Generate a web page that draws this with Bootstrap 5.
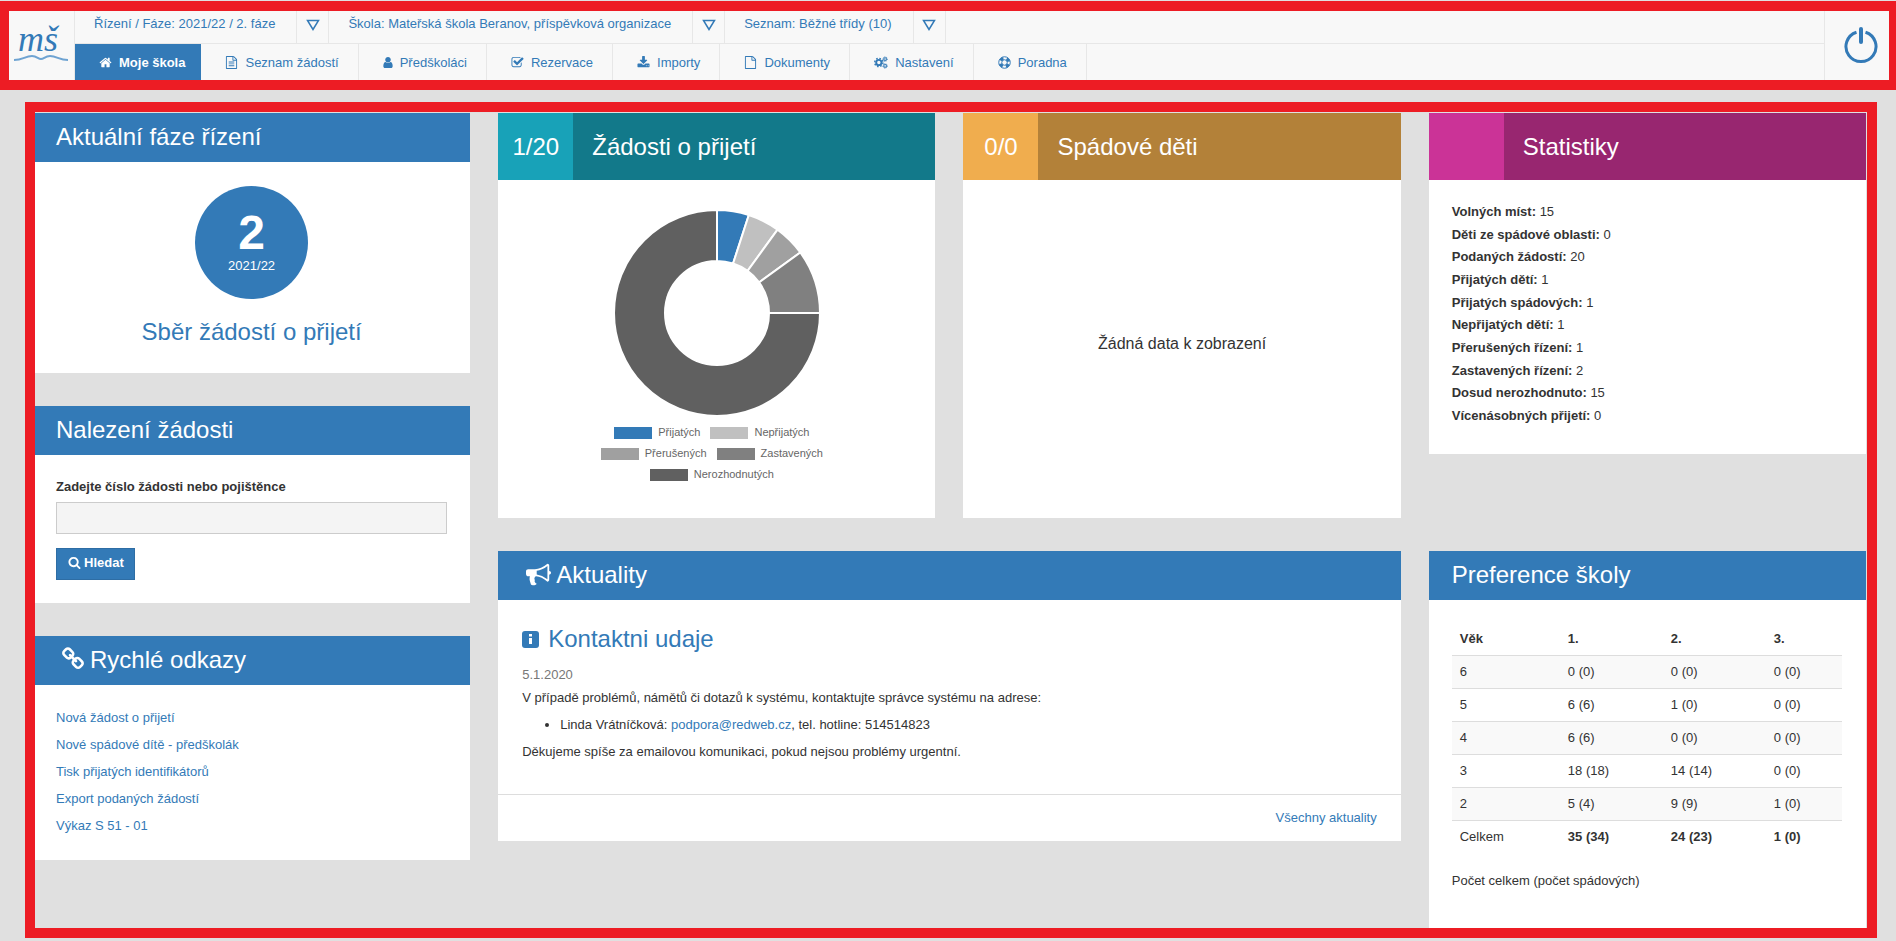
<!DOCTYPE html>
<html lang="cs">
<head>
<meta charset="utf-8">
<meta name="viewport" content="width=device-width, initial-scale=1">
<title>Moje škola</title>
<link href="https://cdn.jsdelivr.net/npm/bootstrap@5.3.0/dist/css/bootstrap.min.css" rel="stylesheet">
<style>
  :root { --blue: #337ab7; --red: #ed1c24; --line: #e7e7e7; }
  body { background: #e0e0e0; color: #333; font: 13px/23px "Liberation Sans", Arial, sans-serif; }
  a { color: var(--blue); text-decoration: none; }
  a:hover { text-decoration: underline; }
  svg { fill: currentColor; display: block; flex: none; }
  h2, h3 { font-size: 24px; line-height: 26px; font-weight: 400; margin: 0; }

  /* top bar */
  .topbar { background: #f8f8f8; border: 10px solid var(--red); border-left-width: 9px; border-right-width: 7px; margin-top: 1px; color: var(--blue); }
  .brand-cell { width: 66px; border-right: 1px solid var(--line); }
  .exit-cell { width: 65px; border-left: 1px solid var(--line); padding: 0 0 2px 8px; }
  .context-row { height: 33px; border-bottom: 1px solid var(--line); }
  .context-row > * { border-right: 1px solid var(--line); padding-bottom: 8px; }
  .context-row a { padding-left: 19px; padding-right: 21px; }
  .context-row button { width: 32px; background: none; color: inherit; border-width: 0 1px 0 0; padding-bottom: 6px; }
  .main-nav { height: 36px; }
  .main-nav a { height: 36px; padding: 0 19px 0 24px; gap: 7px; border-right: 1px solid var(--line); }
  .main-nav a.active { background: var(--blue); color: #fff; font-weight: 700; border-color: var(--blue); padding-right: 15px; }

  /* dashboard */
  .board { border: 10px solid var(--red); margin: 12px 19px 3px 25px; padding: 1px 1px 0 0; display: grid; grid-template-columns: 435fr 1367fr; column-gap: 28px; }
  .board-right { display: grid; grid-template-columns: repeat(3, 1fr); grid-template-rows: auto 1fr; gap: 33px 28px; align-items: start; }
  .side { gap: 33px; }
  .panel { background: #fff; }
  .panel-title { background: var(--blue); color: #fff; padding: 11px 23px 12px; }
  .panel-content { padding: 21px 23px 23px; }
  .side .panel-title, .side .panel-content { padding-left: 21px; }
  h2.with-icon { padding-left: 28px; gap: 5px; }
  .side h2.with-icon { padding-left: 26px; }
  .tile-head { height: 67px; color: #fff; }
  .tile-head .tile-count { width: 75px; font-size: 24px; }
  .tile-head h2 { padding: 0 19px; }
  .teal { background: #12798a; } .teal .tile-count { background: #18a2b8; }
  .amber { background: #b38139; } .amber .tile-count { background: #f0ad4e; }
  .plum { background: #982670; } .plum .tile-count { background: #cb3397; }
  .tile-body { height: 338px; }
  .empty-note { font-size: 16px; padding-bottom: 12px; }
  .phase-box { gap: 20px; padding-top: 24px; padding-bottom: 28px; }
  .phase { width: 113px; height: 113px; border-radius: 50%; background: var(--blue); color: #fff; padding-bottom: 5px; }
  .phase strong { font-size: 48px; line-height: 50px; }
  .phase span { line-height: 15px; }
  .search-form label { line-height: 22px; }
  .field { height: 32px; border: 1px solid #ccc; border-radius: 0; background: #f4f4f4; font-size: 13px; }
  .search-btn { --bs-btn-color: #fff; --bs-btn-bg: #337ab7; --bs-btn-border-color: #2e6da4; --bs-btn-hover-color: #fff; --bs-btn-hover-bg: #286090; border-radius: 0; height: 32px; padding: 0 10px 3px 11px; margin-top: 14px; font-size: 13px; font-weight: 700; gap: 3px; }
  .quick { gap: 4px; }
  .legend { width: 240px; font-size: 11px; line-height: 21px; color: #666; }
  .legend li { margin-right: 10px; gap: 6px; }
  .legend i { width: 38px; height: 12px; }
  .stat-list { height: 226px; line-height: 22px; margin-bottom: 4px; }
  .news-body { padding: 26px 23px 31px; padding-left: 24px; }
  .news-body h3 { margin-bottom: 11px; }
  .news-body h3 a { gap: 9px; }
  .news-body ul { padding-left: 38px; margin: 4px 0; }
  .news-date { color: #777; }
  .news-foot { border-top: 1px solid #ddd; padding: 11px 24px 12px; }
  .prefs-content { padding: 23px 24px 23px 23px; }
  .prefs { --bs-table-striped-bg: #f9f9f9; --bs-table-bg: #fff; --bs-table-color: #333; --bs-table-striped-color: #333; table-layout: fixed; border-color: #ddd; line-height: 20px; }
  .prefs > :not(caption) > * > * { padding: 6px 8px; }
  .prefs > tfoot > tr > td { border-bottom: 0; }
</style>
</head>
<body class="d-flex flex-column min-vh-100">

<header class="topbar d-flex">
  <a href="#" class="brand-cell d-flex align-items-center justify-content-center" aria-label="Úvod">
    <svg width="56" height="60" viewBox="0 0 56 60">
      <text x="4" y="35" font-family="'Liberation Serif', serif" font-style="italic" font-size="36">mš</text>
      <path d="M0 44C9 44 11 40 18 40C23 40 24 43 27 43C30 43 31 40 36 40C43 40 45 44 54 44" fill="none" stroke="#6ea3d2" stroke-width="2"/>
    </svg>
  </a>
  <div class="flex-grow-1">
    <div class="context-row d-flex">
      <a href="#" class="d-flex align-items-center">Řízení / Fáze: 2021/22 / 2. fáze</a>
      <button type="button" class="d-flex align-items-center justify-content-center" aria-label="Vybrat řízení"><svg width="14" height="12" viewBox="0 0 14 12"><path d="M1.500 1.500H12.500L7 10.500Z" fill="none" stroke="currentColor" stroke-width="1.500"/></svg></button>
      <a href="#" class="d-flex align-items-center">Škola: Mateřská škola Beranov, příspěvková organizace</a>
      <button type="button" class="d-flex align-items-center justify-content-center" aria-label="Vybrat školu"><svg width="14" height="12" viewBox="0 0 14 12"><path d="M1.500 1.500H12.500L7 10.500Z" fill="none" stroke="currentColor" stroke-width="1.500"/></svg></button>
      <a href="#" class="d-flex align-items-center">Seznam: Běžné třídy (10)</a>
      <button type="button" class="d-flex align-items-center justify-content-center" aria-label="Vybrat seznam"><svg width="14" height="12" viewBox="0 0 14 12"><path d="M1.500 1.500H12.500L7 10.500Z" fill="none" stroke="currentColor" stroke-width="1.500"/></svg></button>
    </div>
    <nav class="main-nav d-flex">
      <a href="#" class="active d-flex align-items-center"><svg width="13" height="13" viewBox="0 0 1792 1792"><path d="M1472 992v480q0 26-19 45t-45 19h-384v-384h-256v384h-384q-26 0-45-19t-19-45v-480q0-1 .5-3t.5-3l575-474 575 474q1 2 1 6zm223-69l-62 74q-8 9-21 11h-3q-13 0-21-7l-692-577-692 577q-12 8-24 7-13-2-21-11l-62-74q-8-10-7-23.500t11-21.500l719-599q32-26 76-26t76 26l244 204v-195q0-14 9-23t23-9h192q14 0 23 9t9 23v408l219 182q10 8 11 21.500t-7 23.500z"/></svg>Moje škola</a>
      <a href="#" class="d-flex align-items-center"><svg width="13" height="13" viewBox="0 0 1792 1792"><path d="M1596 380q28 28 48 76t20 88v1152q0 40-28 68t-68 28h-1344q-40 0-68-28t-28-68v-1600q0-40 28-68t68-28h896q40 0 88 20t76 48zm-444-244v376h376q-10-29-22-41l-313-313q-12-12-41-22zm384 1528v-1024h-416q-40 0-68-28t-28-68v-416h-768v1536h1280z"/><path d="M512 768h768v128H512zM512 1024h768v128H512zM512 1280h768v128H512z"/></svg>Seznam žádostí</a>
      <a href="#" class="d-flex align-items-center"><svg width="10" height="13" viewBox="256 0 1280 1792"><path d="M1536 1399q0 109-62.500 187t-150.500 78h-854q-88 0-150.500-78t-62.500-187q0-85 8.500-160.500t31.500-152 58.500-131 94-89 134.500-34.500q131 128 313 128t313-128q76 0 134.500 34.500t94 89 58.500 131 31.500 152 8.500 160.500zm-256-887q0 159-112.500 271.500t-271.500 112.500-271.500-112.500-112.500-271.500 112.500-271.500 271.500-112.500 271.500 112.500 112.500 271.500z"/></svg>Předškoláci</a>
      <a href="#" class="d-flex align-items-center"><svg width="13" height="13" viewBox="0 0 1792 1792"><path d="M1472 930v318q0 119-84.500 203.500t-203.500 84.500h-832q-119 0-203.500-84.500t-84.500-203.500v-832q0-119 84.500-203.500t203.500-84.500h832q63 0 117 25 15 7 18 23 3 17-9 29l-49 49q-10 10-23 10-3 0-9-2-23-6-45-6h-832q-66 0-113 47t-47 113v832q0 66 47 113t113 47h832q66 0 113-47t47-113v-254q0-13 9-22l64-64q10-10 23-10 6 0 12 3 20 8 20 29zm231-489l-814 814q-24 24-57 24t-57-24l-430-430q-24-24-24-57t24-57l110-110q24-24 57-24t57 24l263 263 647-647q24-24 57-24t57 24l110 110q24 24 24 57t-24 57z"/></svg>Rezervace</a>
      <a href="#" class="d-flex align-items-center"><svg width="13" height="13" viewBox="0 0 1792 1792"><path d="M1344 1344q0-26-19-45t-45-19-45 19-19 45 19 45 45 19 45-19 19-45zm256 0q0-26-19-45t-45-19-45 19-19 45 19 45 45 19 45-19 19-45zm128-224v320q0 40-28 68t-68 28h-1472q-40 0-68-28t-28-68v-320q0-40 28-68t68-28h465l135 136q58 56 136 56t136-56l136-136h464q40 0 68 28t28 68zm-325-569q17 41-14 70l-448 448q-18 19-45 19t-45-19l-448-448q-31-29-14-70 17-39 59-39h256v-448q0-26 19-45t45-19h256q26 0 45 19t19 45v448h256q42 0 59 39z"/></svg>Importy</a>
      <a href="#" class="d-flex align-items-center"><svg width="13" height="13" viewBox="0 0 1792 1792"><path d="M1596 380q28 28 48 76t20 88v1152q0 40-28 68t-68 28h-1344q-40 0-68-28t-28-68v-1600q0-40 28-68t68-28h896q40 0 88 20t76 48zm-444-244v376h376q-10-29-22-41l-313-313q-12-12-41-22zm384 1528v-1024h-416q-40 0-68-28t-28-68v-416h-768v1536h1280z"/></svg>Dokumenty</a>
      <a href="#" class="d-flex align-items-center"><svg width="14" height="13" viewBox="0 0 29 26"><g fill="none" stroke="currentColor"><circle cx="10" cy="13" r="5.500" stroke-width="4"/><circle cx="10" cy="13" r="8.500" stroke-width="3" stroke-dasharray="3.340 3.340"/><circle cx="23" cy="6" r="2.800" stroke-width="2.200"/><circle cx="23" cy="6" r="4.600" stroke-width="2" stroke-dasharray="1.810 1.810"/><circle cx="23" cy="20" r="2.800" stroke-width="2.200"/><circle cx="23" cy="20" r="4.600" stroke-width="2" stroke-dasharray="1.810 1.810"/></g></svg>Nastavení</a>
      <a href="#" class="d-flex align-items-center"><svg width="13" height="13" viewBox="0 0 26 26"><g fill="none" stroke="currentColor"><circle cx="13" cy="13" r="11.500" stroke-width="2"/><circle cx="13" cy="13" r="5.500" stroke-width="2"/><circle cx="13" cy="13" r="8.500" stroke-width="6" stroke-dasharray="6.680 6.680" stroke-dashoffset="-3.340"/></g></svg>Poradna</a>
    </nav>
  </div>
  <a href="#" class="exit-cell d-flex align-items-center justify-content-center" aria-label="Odhlásit">
    <svg width="36" height="38" viewBox="0 0 36 38"><path d="M13.500 6.200A15 15 0 1 0 22.500 6.200" fill="none" stroke="currentColor" stroke-width="3"/><path d="M18 3V16" stroke="currentColor" stroke-width="4" stroke-linecap="round"/></svg>
  </a>
</header>

<main class="board flex-grow-1">
  <div class="side d-flex flex-column">
    <section class="panel">
      <h2 class="panel-title">Aktuální fáze řízení</h2>
      <div class="panel-content phase-box d-flex flex-column align-items-center">
        <div class="phase d-flex flex-column align-items-center justify-content-center"><strong>2</strong><span>2021/22</span></div>
        <h3><a href="#">Sběr žádostí o přijetí</a></h3>
      </div>
    </section>
    <section class="panel">
      <h2 class="panel-title">Nalezení žádosti</h2>
      <form class="panel-content search-form">
        <label for="cislo" class="d-block fw-bold mb-1">Zadejte číslo žádosti nebo pojištěnce</label>
        <input id="cislo" type="text" class="field form-control">
        <button type="submit" class="search-btn btn d-flex align-items-center"><svg width="13" height="13" viewBox="0 0 1792 1792"><path d="M1216 832q0-185-131.500-316.500t-316.500-131.500-316.500 131.500-131.500 316.500 131.500 316.500 316.500 131.500 316.500-131.500 131.500-316.500zm512 832q0 52-38 90t-90 38q-54 0-90-38l-343-342q-179 124-399 124-143 0-273.500-55.500t-225-150-150-225-55.500-273.500 55.500-273.500 150-225 225-150 273.500-55.500 273.500 55.500 225 150 150 225 55.500 273.500q0 220-124 399l343 343q37 37 37 90z"/></svg>Hledat</button>
      </form>
    </section>
    <section class="panel">
      <h2 class="panel-title with-icon d-flex"><svg width="24" height="24" viewBox="0 0 1792 1792"><path d="M1520 1216q0-40-28-68l-208-208q-28-28-68-28-42 0-72 32 3 3 19 18.500t21.500 21.500 15 19 13 25.500 3.500 27.500q0 40-28 68t-68 28q-15 0-27.500-3.500t-25.500-13-19-15-21.500-21.500-18.500-19q-33 31-33 73 0 40 28 68l206 207q27 27 68 27 40 0 68-26l147-146q28-28 28-67zm-703-705q0-40-28-68l-206-207q-28-28-68-28-39 0-68 27l-147 146q-28 28-28 67 0 40 28 68l208 208q27 27 68 27 42 0 72-31-3-3-19-18.500t-21.500-21.500-15-19-13-25.500-3.500-27.500q0-40 28-68t68-28q15 0 27.500 3.500t25.500 13 19 15 21.500 21.500 18.500 19q33-31 33-73zm895 705q0 120-85 203l-147 146q-83 83-203 83-121 0-204-85l-206-207q-83-83-83-203 0-123 88-209l-88-88q-86 88-208 88-120 0-204-84l-208-208q-84-84-84-204t85-203l147-146q83-83 203-83 121 0 204 85l206 207q83 83 83 203 0 123-88 209l88 88q86-88 208-88 120 0 204 84l208 208q84 84 84 204z"/></svg>Rychlé odkazy</h2>
      <div class="panel-content">
        <ul class="quick list-unstyled d-flex flex-column mb-0">
          <li><a href="#">Nová žádost o přijetí</a></li>
          <li><a href="#">Nové spádové dítě - předškolák</a></li>
          <li><a href="#">Tisk přijatých identifikátorů</a></li>
          <li><a href="#">Export podaných žádostí</a></li>
          <li><a href="#">Výkaz S 51 - 01</a></li>
        </ul>
      </div>
    </section>
  </div>

  <div class="board-right">
    <section class="panel">
      <div class="tile-head teal d-flex"><div class="tile-count d-flex align-items-center justify-content-center">1/20</div><h2 class="d-flex align-items-center">Žádosti o přijetí</h2></div>
      <div class="tile-body d-flex flex-column align-items-center pt-4">
        <svg class="mt-1" width="210" height="210" viewBox="-105 -105 210 210" stroke="#fff" stroke-width="2" role="img" aria-label="Graf žádostí">
          <path fill="#337ab7" d="M0-103A103 103 0 0 1 31.830-97.960L16.070-49.450A52 52 0 0 0 0-52Z"/>
          <path fill="#c0c0c0" d="M31.830-97.960A103 103 0 0 1 60.540-83.330L30.560-42.070A52 52 0 0 0 16.070-49.450Z"/>
          <path fill="#a0a0a0" d="M60.540-83.330A103 103 0 0 1 83.330-60.540L42.070-30.560A52 52 0 0 0 30.560-42.070Z"/>
          <path fill="#808080" d="M83.330-60.540A103 103 0 0 1 103 0L52 0A52 52 0 0 0 42.070-30.560Z"/>
          <path fill="#606060" d="M103 0A103 103 0 1 1 0-103L0-52A52 52 0 1 0 52 0Z"/>
        </svg>
        <ul class="legend list-unstyled d-flex flex-wrap justify-content-center mt-1">
          <li class="d-flex align-items-center"><i style="background:#337ab7"></i>Přijatých</li>
          <li class="d-flex align-items-center"><i style="background:#c0c0c0"></i>Nepřijatých</li>
          <li class="d-flex align-items-center"><i style="background:#a0a0a0"></i>Přerušených</li>
          <li class="d-flex align-items-center"><i style="background:#808080"></i>Zastavených</li>
          <li class="d-flex align-items-center"><i style="background:#606060"></i>Nerozhodnutých</li>
        </ul>
      </div>
    </section>
    <section class="panel">
      <div class="tile-head amber d-flex"><div class="tile-count d-flex align-items-center justify-content-center">0/0</div><h2 class="d-flex align-items-center">Spádové děti</h2></div>
      <div class="tile-body empty-note d-flex align-items-center justify-content-center">Žádná data k zobrazení</div>
    </section>
    <section class="panel">
      <div class="tile-head plum d-flex"><div class="tile-count"></div><h2 class="d-flex align-items-center">Statistiky</h2></div>
      <div class="panel-content">
        <ul class="stat-list list-unstyled d-flex flex-column justify-content-between">
          <li><b>Volných míst:</b> 15</li>
          <li><b>Děti ze spádové oblasti:</b> 0</li>
          <li><b>Podaných žádostí:</b> 20</li>
          <li><b>Přijatých dětí:</b> 1</li>
          <li><b>Přijatých spádových:</b> 1</li>
          <li><b>Nepřijatých dětí:</b> 1</li>
          <li><b>Přerušených řízení:</b> 1</li>
          <li><b>Zastavených řízení:</b> 2</li>
          <li><b>Dosud nerozhodnuto:</b> 15</li>
          <li><b>Vícenásobných přijetí:</b> 0</li>
        </ul>
      </div>
    </section>

    <section class="panel" style="grid-column: span 2">
      <h2 class="panel-title with-icon d-flex"><svg width="25" height="25" viewBox="0 0 1792 1792"><path d="M1664 640q53 0 90.500 37.500t37.500 90.500-37.500 90.500-90.500 37.500v384q0 52-38 90t-90 38q-417-347-812-380-58 19-91 66t-31 100.500 40 92.500q-20 33-23 65.500t6 58 33.500 55 48 50 61.500 50.500q-29 58-111.500 83t-168.500 11.500-132-55.500q-7-23-29.500-87.500t-32-94.500-23-89-15-101 3.500-98.500 22-110.500h-122q-66 0-113-47t-47-113v-192q0-66 47-113t113-47h480q435 0 896-384 52 0 90 38t38 90v384zm-128 604v-954q-394 302-768 343v270q377 42 768 341z"/></svg>Aktuality</h2>
      <div class="news-body">
        <h3><a href="#" class="d-flex align-items-center"><svg width="17" height="17" viewBox="0 0 17 17"><rect width="17" height="17" rx="3"/><path d="M7 3h3v2.500H7zM7 7h3v6H7z" fill="#fff"/></svg>Kontaktni udaje</a></h3>
        <div class="news-date">5.1.2020</div>
        <div>V případě problémů, námětů či dotazů k systému, kontaktujte správce systému na adrese:</div>
        <ul><li>Linda Vrátníčková: <a href="#">podpora@redweb.cz</a>, tel. hotline: 514514823</li></ul>
        <div>Děkujeme spíše za emailovou komunikaci, pokud nejsou problémy urgentní.</div>
      </div>
      <div class="news-foot text-end"><a href="#">Všechny aktuality</a></div>
    </section>

    <section class="panel align-self-stretch">
      <h2 class="panel-title">Preference školy</h2>
      <div class="prefs-content">
        <table class="prefs table table-striped mb-0">
          <colgroup><col style="width:27.700%"><col style="width:26.400%"><col style="width:26.400%"><col></colgroup>
          <thead><tr><th>Věk</th><th>1.</th><th>2.</th><th>3.</th></tr></thead>
          <tbody>
            <tr><td>6</td><td>0 (0)</td><td>0 (0)</td><td>0 (0)</td></tr>
            <tr><td>5</td><td>6 (6)</td><td>1 (0)</td><td>0 (0)</td></tr>
            <tr><td>4</td><td>6 (6)</td><td>0 (0)</td><td>0 (0)</td></tr>
            <tr><td>3</td><td>18 (18)</td><td>14 (14)</td><td>0 (0)</td></tr>
            <tr><td>2</td><td>5 (4)</td><td>9 (9)</td><td>1 (0)</td></tr>
          </tbody>
          <tfoot><tr><td>Celkem</td><td class="fw-bold">35 (34)</td><td class="fw-bold">24 (23)</td><td class="fw-bold">1 (0)</td></tr></tfoot>
        </table>
        <p class="mt-3 mb-0">Počet celkem (počet spádových)</p>
      </div>
    </section>
  </div>
</main>

<script src="https://cdn.jsdelivr.net/npm/bootstrap@5.3.0/dist/js/bootstrap.bundle.min.js"></script>
</body>
</html>
